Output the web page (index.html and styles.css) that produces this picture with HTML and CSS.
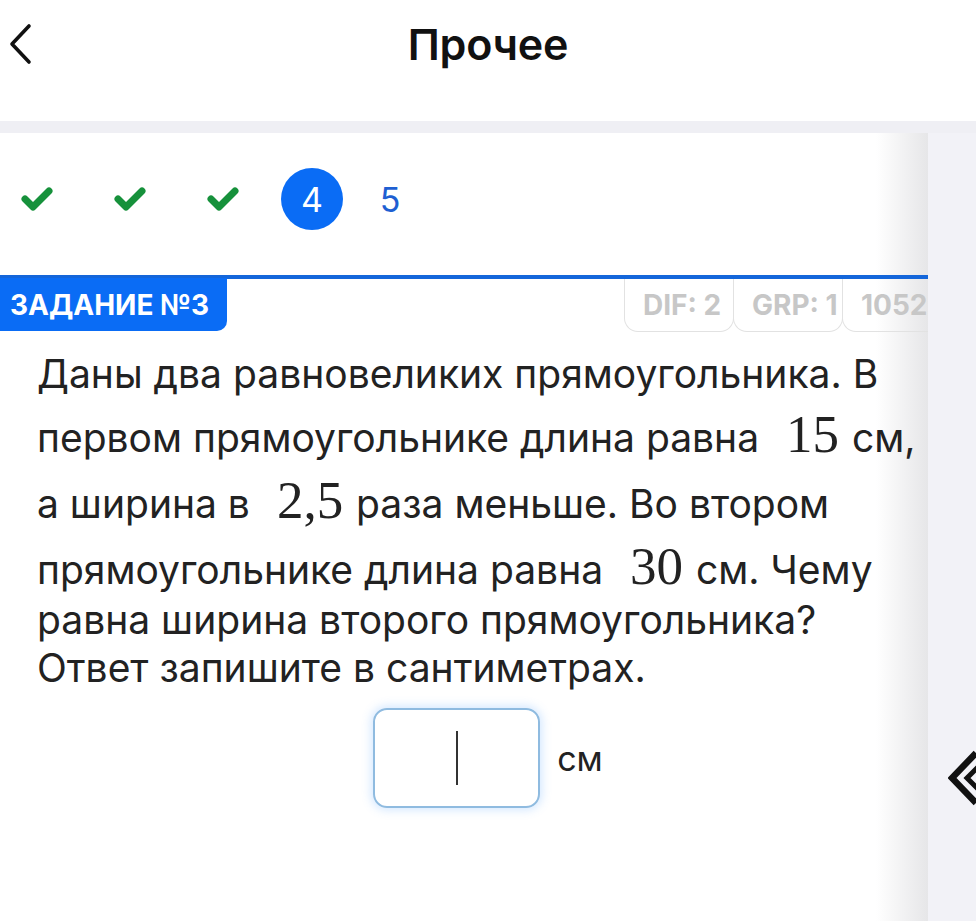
FILE: index.html
```html
<!DOCTYPE html>
<html lang="ru">
<head>
<meta charset="UTF-8" />
<meta name="viewport" content="width=device-width, initial-scale=1.0"/>
<title>Прочее</title>
<link rel="stylesheet" href="styles.css">
</head>
<body>

<header class="header">
  <a href="#" class="back" aria-label="Назад">
    <svg width="26" height="42" viewBox="0 0 26 42"><path d="M21 3 L4 21 L21 39" fill="none" stroke="#111" stroke-width="3.6" stroke-linecap="round" stroke-linejoin="round"/></svg>
  </a>
  <h1 class="title">Прочее</h1>
  <span></span>
</header>

<div class="band"></div>

<div class="main">
  <div class="content">

    <div class="steps">
      <span class="step done"><svg width="34" height="28" viewBox="0 0 34 28"><path d="M5 14 L13 22 L29 6" fill="none" stroke="#16913b" stroke-width="7" stroke-linecap="round" stroke-linejoin="round"/></svg></span>
      <span class="step done"><svg width="34" height="28" viewBox="0 0 34 28"><path d="M5 14 L13 22 L29 6" fill="none" stroke="#16913b" stroke-width="7" stroke-linecap="round" stroke-linejoin="round"/></svg></span>
      <span class="step done"><svg width="34" height="28" viewBox="0 0 34 28"><path d="M5 14 L13 22 L29 6" fill="none" stroke="#16913b" stroke-width="7" stroke-linecap="round" stroke-linejoin="round"/></svg></span>
      <span class="step current">4</span>
      <span class="step next">5</span>
    </div>

    <div class="task-bar">
      <div class="task-tab">ЗАДАНИЕ №3</div>
      <div class="tags">
        <span class="tag">DIF: 2</span>
        <span class="tag">GRP: 1</span>
        <span class="tag">1052</span>
      </div>
    </div>

    <p class="question">
      Даны два равновеликих прямоугольника. В первом прямоугольнике длина равна <span class="math">15</span> см,
      а ширина в <span class="math">2,5</span> раза меньше. Во втором прямоугольнике длина равна <span class="math">30</span> см. Чему
      равна ширина второго прямоугольника? Ответ запишите в сантиметрах.
    </p>

    <div class="answer">
      <div class="answer-box"><span class="caret"></span></div>
      <span class="unit">см</span>
    </div>

  </div>

  <div class="side">
    <svg class="side-arrow" width="30" height="56" viewBox="0 0 30 56"><path d="M28 3 L4 28 L28 53" fill="none" stroke="#111" stroke-width="6.5" stroke-linejoin="miter"/><path d="M30 17 L19 28 L30 39" fill="none" stroke="#111" stroke-width="5"/></svg>
  </div>
</div>

</body>
</html>
```

FILE: styles.css
```css
* {
  box-sizing: border-box;
}

body {
  margin: 0;
  background: #fff;
  color: #1f1f1f;
  font-family: Inter, "Noto Sans", sans-serif;
  height: 921px;
  overflow: hidden;
}

.header {
  display: grid;
  grid-template-columns: 1fr auto 1fr;
  align-items: center;
  height: 88px;
  margin-bottom: 33px;
}

.back {
  display: flex;
  align-items: center;
  margin-left: 8px;
}

.title {
  margin: 0;
  font-size: 43px;
  font-weight: 600;
  color: #111;
  letter-spacing: -0.2px;
}

.band {
  height: 12px;
  background: #efeff4;
}

.main {
  display: flex;
  height: 788px;
}

.content {
  width: 928px;
  overflow: hidden;
  background: linear-gradient(to right, #fff 0, #fff calc(100% - 52px), #e6e6e8 100%);
}

.side {
  flex: 1;
  position: relative;
  background: #f2f2f7;
}

.side-arrow {
  position: absolute;
  left: 20px;
  top: 617px;
}

/* шаги */
.steps {
  display: flex;
  align-items: center;
  gap: 31px;
  padding: 35px 0 0 6px;
  height: 97px;
}

.step {
  width: 62px;
  height: 62px;
  display: flex;
  align-items: center;
  justify-content: center;
  font-size: 34px;
}

.step.current {
  margin-left: -4px;
  border-radius: 50%;
  background: #0a6cf5;
  color: #fff;
}

.step.next {
  width: 32px;
  color: #1e5fd2;
}

/* заголовок задания */
.task-bar {
  display: flex;
  margin-top: 45px;
  border-top: 4px solid #1466da;
  height: 57px;
}

.task-tab {
  flex: none;
  width: 227px;
  height: 53px;
  margin-top: -1px;
  padding-left: 10px;
  display: flex;
  align-items: center;
  background: #0a6cf5;
  color: #fff;
  font-size: 28px;
  font-weight: 700;
  border-radius: 0 0 10px 0;
}

.tags {
  display: flex;
  padding-left: 397px;
  flex: none;
}

.tag {
  flex: none;
  width: 110px;
  height: 53px;
  padding-left: 18px;
  display: flex;
  align-items: center;
  overflow: hidden;
  border: 1.5px solid #e2e2e2;
  border-top: none;
  border-radius: 0 0 14px 14px;
  color: #c7c7c7;
  font-size: 28px;
  font-weight: 700;
  white-space: nowrap;
}

.tag + .tag {
  margin-left: -1px;
}

/* текст задачи */
.question {
  margin: 18px 0 0;
  padding: 0 2px 0 37px;
  font-size: 39px;
  line-height: 48px;
  color: #222;
}

.math {
  display: inline-block;
  font-family: "Liberation Serif", "DejaVu Serif", serif;
  font-size: 53px;
  line-height: 1;
  padding: 10px 2px 3px 16px;
}

/* ответ */
.answer {
  display: flex;
  align-items: center;
  justify-content: center;
  gap: 17px;
  margin-top: 16px;
  padding-left: 48px;
}

.answer-box {
  width: 167px;
  height: 100px;
  border: 2px solid #8fbbe0;
  border-radius: 14px;
  box-shadow: 0 0 10px 2px rgba(80, 160, 255, 0.25);
  display: flex;
  align-items: center;
  justify-content: center;
}

.caret {
  width: 2px;
  height: 54px;
  background: #333;
}

.unit {
  font-size: 34px;
  color: #222;
}
```
